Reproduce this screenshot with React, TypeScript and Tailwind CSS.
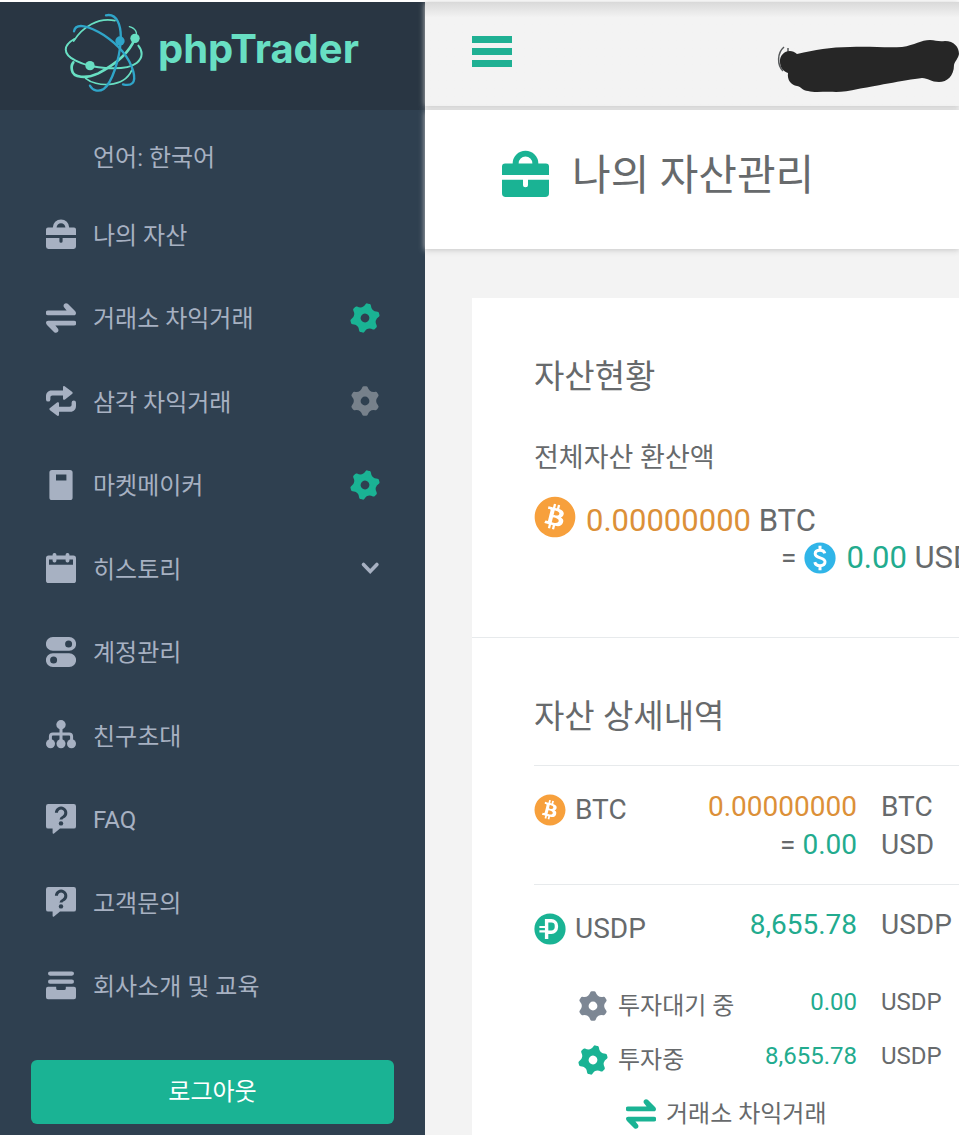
import type { ReactNode } from "react";
import { FaBitcoin } from "react-icons/fa";
import { clsx } from "clsx";

type IconProps = { className?: string };

/* ---------- Icons ---------- */

function BriefcaseIcon({ className }: IconProps) {
  return (
    <svg viewBox="0 0 30 30" fill="currentColor" className={className} aria-hidden="true">
      <path d="M6.8 8.6a8.2 8.2 0 0 1 16.4 0H28a2 2 0 0 1 2 2v5.3H0v-5.3a2 2 0 0 1 2-2zm3.800 0h8.800a4.400 4.400 0 0 0-8.800 0z" />
      <path d="M0 19h13.400v3.200a1.600 1.600 0 0 0 3.200 0V19H30v8.600a2.400 2.400 0 0 1-2.400 2.400H2.400A2.400 2.400 0 0 1 0 27.600z" />
    </svg>
  );
}

function ExchangeIcon({ className }: IconProps) {
  return (
    <svg viewBox="0 0 30 30" fill="currentColor" className={className} aria-hidden="true">
      <path d="M2 7.600h18.600L18 4.200C16.400 1.600 19.400-1 21.800.8L29 8c1.800 1.800 1 4.200-1.200 4.200H2a2.300 2.300 0 0 1 0-4.600z" />
      <path d="M28 22.400H9.400l2.600 3.400c1.600 2.600-1.400 5.200-3.800 3.400L1 22c-1.800-1.800-1-4.200 1.200-4.200H28a2.300 2.300 0 0 1 0 4.600z" />
    </svg>
  );
}

function RepeatIcon({ className }: IconProps) {
  return (
    <svg viewBox="0 0 30 30" fill="currentColor" className={className} aria-hidden="true">
      <path d="M17 1.200c0-1.200 1-1.600 2-.8l7 5.400c.9.700.9 1.500 0 2.200l-7 5.400c-1 .8-2 .4-2-.8V9.400H6.500c-1.400 0-2.100.7-2.100 2v2a2.200 2.200 0 0 1-4.400 0V10.500C0 7 2 4.500 5.600 4.500H17z" />
      <path d="M13 28.800c0 1.200-1 1.600-2 .8l-7-5.400c-.9-.7-.9-1.500 0-2.200l7-5.400c1-.8 2-.4 2 .8v3.400h10.500c1.400 0 2.100-.7 2.100-2v-2a2.200 2.200 0 0 1 4.400 0v2.900c0 3.500-2 6-5.600 6H13z" />
    </svg>
  );
}

function MarketIcon({ className }: IconProps) {
  return (
    <svg viewBox="0 0 30 30" fill="currentColor" fillRule="evenodd" className={className} aria-hidden="true">
      <path d="M6 0h18a2.600 2.600 0 0 1 2.600 2.600v24.800A2.600 2.600 0 0 1 24 30H6a2.600 2.600 0 0 1-2.600-2.600V2.600A2.600 2.600 0 0 1 6 0zm4 4.400v6h10.400v-6z" />
    </svg>
  );
}

function CalendarIcon({ className }: IconProps) {
  return (
    <svg viewBox="0 0 30 30" fill="currentColor" fillRule="evenodd" className={className} aria-hidden="true">
      <path d="M2.600 2.600h24.800A2.600 2.600 0 0 1 30 5.200v22.200a2.600 2.600 0 0 1-2.600 2.600H2.600A2.600 2.600 0 0 1 0 27.400V5.200a2.600 2.600 0 0 1 2.600-2.600zm.4 3.800v5.400h24V6.400z" />
      <rect x="6.600" y="0" width="3.800" height="9.400" rx="1.700" />
      <rect x="19.600" y="0" width="3.800" height="9.400" rx="1.700" />
    </svg>
  );
}

function AccountIcon({ className }: IconProps) {
  return (
    <svg viewBox="0 0 30 30" fill="currentColor" fillRule="evenodd" className={className} aria-hidden="true">
      <path d="M6.800 0h16.400a6.900 6.900 0 0 1 0 13.800H6.800A6.900 6.900 0 0 1 6.800 0zm15.800 3.500a3.500 3.500 0 1 0 0 7 3.500 3.500 0 0 0 0-7z" />
      <path d="M6.800 16.200h16.400a6.900 6.900 0 0 1 0 13.800H6.800a6.900 6.900 0 0 1 0-13.800zm.8 3.400a3.500 3.500 0 1 0 0 7 3.500 3.500 0 0 0 0-7z" />
    </svg>
  );
}

function NetworkIcon({ className }: IconProps) {
  return (
    <svg viewBox="0 0 30 30" fill="currentColor" className={className} aria-hidden="true">
      <path d="M15 5v18M4.400 23v-6.500q0-2.500 2.500-2.500h16.200q2.500 0 2.500 2.500V23" fill="none" stroke="currentColor" strokeWidth="3" />
      <circle cx="15" cy="4.800" r="4.700" />
      <circle cx="4.500" cy="23.800" r="4.500" />
      <circle cx="15" cy="23.800" r="4.500" />
      <circle cx="25.500" cy="23.800" r="4.500" />
    </svg>
  );
}

function QuestionIcon({ className }: IconProps) {
  return (
    <svg viewBox="0 0 30 30" fill="currentColor" className={className} aria-hidden="true">
      <path d="M2.200 0h25.600A2.200 2.200 0 0 1 30 2.200v20.200a2.200 2.200 0 0 1-2.200 2.200H14l-6 4.800c-.8.600-1.400.3-1.400-.6v-4.200H2.200A2.200 2.200 0 0 1 0 22.400V2.200A2.200 2.200 0 0 1 2.200 0z" />
      <path d="M10.400 8.800a4.700 4.700 0 1 1 7.200 4Q15 14.200 15 15.400" fill="none" stroke="#2f4050" strokeWidth="3" />
      <circle cx="15" cy="19.400" r="2.200" fill="#2f4050" />
    </svg>
  );
}

function DrawerIcon({ className }: IconProps) {
  return (
    <svg viewBox="0 0 30 30" fill="currentColor" className={className} aria-hidden="true">
      <rect x="2" y="0.500" width="26" height="4.200" rx="2.100" />
      <rect x="2" y="8.600" width="26" height="4.200" rx="2.100" />
      <path d="M2 15.800h8.200v1.600q0 1.600 1.600 1.600h6.400q1.600 0 1.600-1.600v-1.600H28a2 2 0 0 1 2 2v8.400a2 2 0 0 1-2 2H2a2 2 0 0 1-2-2v-8.400a2 2 0 0 1 2-2z" />
    </svg>
  );
}

// Six-toothed gear, built from tooth tips joined by curved valleys
const polar = (deg: number, r: number) => {
  const a = (deg * Math.PI) / 180;
  return `${(15 + r * Math.sin(a)).toFixed(2)} ${(15 - r * Math.cos(a)).toFixed(2)}`;
};
const GEAR_PATH =
  [0, 60, 120, 180, 240, 300]
    .map((t, i) => `${i ? "" : `M${polar(-5, 13.2)}`}L${polar(t + 5, 13.2)}Q${polar(t + 30, 7)} ${polar(t + 55, 13.2)}`)
    .join("") + "Z";

function GearIcon({ className, active }: IconProps & { active?: boolean }) {
  return (
    <svg
      viewBox="0 0 30 30"
      className={clsx("size-[30px] shrink-0", active && "rotate-[14deg] text-[#1ab394]", className)}
      aria-hidden="true"
    >
      <path
        d={`${GEAR_PATH}M15 9a6 6 0 1 0 0 12a6 6 0 0 0 0-12Z`}
        fill="currentColor"
        fillRule="evenodd"
        stroke="currentColor"
        strokeWidth="3.200"
        strokeLinejoin="round"
      />
    </svg>
  );
}

function ChevronIcon() {
  return (
    <svg viewBox="0 0 20 14" className="h-[14px] w-5 shrink-0" fill="none" stroke="currentColor" strokeWidth="3.600" strokeLinecap="round" aria-hidden="true">
      <path d="M3.500 3.500l6.700 7 6.700-7" />
    </svg>
  );
}

function DollarCoin() {
  return (
    <svg viewBox="0 0 32 32" className="size-8 shrink-0" aria-hidden="true">
      <circle cx="16" cy="16" r="15.600" fill="#30b5e8" />
      <path d="M20.800 11.400c-.5-2-2.300-3.200-4.800-3.200-2.900 0-4.800 1.500-4.800 3.600 0 5 9.800 3.100 9.800 8 0 2.400-2 3.900-5 3.900-2.800 0-4.700-1.300-5.200-3.600M16 3.800v5M16 23v5.200" fill="none" stroke="#fff" strokeWidth="3" />
    </svg>
  );
}

function UsdpCoin() {
  return (
    <svg viewBox="0 0 32 32" className="size-8 shrink-0" aria-hidden="true">
      <circle cx="16" cy="16" r="15.600" fill="#1ab394" />
      <path d="M12.600 26V7.800h4.800a5 5 0 0 1 5 5v1.400a5 5 0 0 1-5 5H13" fill="none" stroke="#fff" strokeWidth="3.400" />
      <path d="M5.400 14h6M5.400 18.400h6" stroke="#fff" strokeWidth="2.200" />
    </svg>
  );
}

function OrbitLogo() {
  return (
    <svg viewBox="27 24 240 240" className="size-20 shrink-0" fill="none" strokeLinecap="round" aria-hidden="true">
      <g stroke="#68dfc3">
        <path d="M180 47C130 36 82 66 56 108" strokeWidth="5" />
        <path d="M58 102C26 120 20 146 62 167C110 192 210 200 245 174C266 158 262 136 250 122" strokeWidth="6" />
        <path d="M240 100C224 142 182 178 130 205C94 222 54 218 51 196C48 184 52 176 55 172" strokeWidth="8" />
        <path d="M240 100C250 84 242 70 223 65" strokeWidth="4" />
        <path d="M92 220C122 246 206 250 230 196" strokeWidth="5" />
      </g>
      <g stroke="#2fa5c9">
        <path d="M153 31C186 24 200 62 197 108C194 162 170 236 146 252C130 262 112 256 105 242" strokeWidth="7" />
        <path d="M57 79C62 52 102 62 146 90C194 122 224 160 235 200C244 234 230 244 204 238" strokeWidth="7" />
      </g>
      <circle cx="195" cy="108" r="14" fill="#2fa5c9" />
      <circle cx="240" cy="100" r="14" fill="#68dfc3" />
      <circle cx="105" cy="182" r="14" fill="#68dfc3" />
    </svg>
  );
}

/* ---------- Sidebar ---------- */

const ICON = "size-[30px] shrink-0";

const MENU: { label: string; icon: ReactNode; extra?: ReactNode }[] = [
  { label: "나의 자산", icon: <BriefcaseIcon className={ICON} /> },
  { label: "거래소 차익거래", icon: <ExchangeIcon className={ICON} />, extra: <GearIcon active /> },
  { label: "삼각 차익거래", icon: <RepeatIcon className={ICON} />, extra: <GearIcon className="text-[#77818b]" /> },
  { label: "마켓메이커", icon: <MarketIcon className={ICON} />, extra: <GearIcon active /> },
  { label: "히스토리", icon: <CalendarIcon className={ICON} />, extra: <ChevronIcon /> },
  { label: "계정관리", icon: <AccountIcon className={ICON} /> },
  { label: "친구초대", icon: <NetworkIcon className={ICON} /> },
  { label: "FAQ", icon: <QuestionIcon className={ICON} /> },
  { label: "고객문의", icon: <QuestionIcon className={ICON} /> },
  { label: "회사소개 및 교육", icon: <DrawerIcon className={ICON} /> },
];

function Sidebar() {
  return (
    <aside className="flex w-[425px] shrink-0 flex-col bg-[#2f4050] pb-[11px] text-2xl text-[#a7b1c2]">
      <a href="#" className="flex h-[108px] items-start gap-[14px] bg-[#293643] pt-[11px] pl-16">
        <OrbitLogo />
        <span className="pt-3 font-[Inter] text-[40px] leading-[48px] font-bold text-[#68dfc3]">phpTrader</span>
      </a>
      <button type="button" className="h-[83px] pt-3 pl-[93px] text-left">
        언어: 한국어
      </button>
      <nav className="flex flex-1 flex-col">
        <ul className="grid flex-1 auto-rows-fr">
          {MENU.map((item) => (
            <li key={item.label} className="flex">
              <a href="#" className="flex flex-1 items-center gap-[17px] pr-[45px] pb-px pl-[46px]">
                {item.icon}
                <span className="flex-1 pt-[3px]">{item.label}</span>
                {item.extra}
              </a>
            </li>
          ))}
        </ul>
      </nav>
      <button type="button" className="mx-[31px] mt-8 h-16 rounded-md bg-[#1ab394] text-white">
        로그아웃
      </button>
    </aside>
  );
}

/* ---------- Main ---------- */

function TopBar() {
  return (
    <header className="flex h-[104px] items-start justify-between bg-[#f3f3f3] bg-linear-to-b from-[#d9d9d9] to-[#f3f3f3] to-15% pl-[47px] shadow-[0_1px_6px_#c4c4c4]">
      <button type="button" aria-label="menu" className="mt-[34px] flex w-10 flex-col gap-[5px]">
        <span className="h-[7px] bg-[#1fb093]" />
        <span className="h-[7px] bg-[#1fb093]" />
        <span className="h-[7px] bg-[#1fb093]" />
      </button>
      <svg viewBox="776 36 183 60" className="mt-[34px] h-[60px] w-[183px] shrink-0" aria-hidden="true">
        <path d="M784 47C777 53 777 65 783 71M788 48v8" fill="none" stroke="#55585a" strokeWidth="1.500" />
        <path
          d="M780 62C779 53 790 47 797 54C815 50 830 47 850 47C870 46 885 48 902 47C915 45 921 40 930 40C936 40 938 42 945 41C954 41 959 47 959 54C958 59 955 61 954 65C954 76 947 82 939 82C931 82 928 78 922 78C905 80 870 87 858 89C850 91 842 92 836 92C826 91 815 93 808 91C803 91 800 86 797 86C791 85 787 80 788 73C783 71 780 67 780 62Z"
          fill="#262626"
        />
      </svg>
    </header>
  );
}

function Num({ children, orange }: { children: ReactNode; orange?: boolean }) {
  return <span className={orange ? "text-[#dc9038]" : "text-[#22ab8e]"}>{children}</span>;
}

function AssetSummary() {
  return (
    <section className="border-b border-[#e7eaec] pt-[59px] pb-[63px] pl-[62px]">
      <h2 className="text-[33px] leading-10">자산현황</h2>
      <h3 className="mt-[45px] text-[27px] leading-8">전체자산 환산액</h3>
      <div className="mt-[22px] flex gap-[10px] text-[31px]">
        <FaBitcoin className="size-[42px] shrink-0 text-[#f7a03c]" />
        <p className="pt-1 leading-[42px]">
          <Num orange>0.00000000</Num> BTC
        </p>
      </div>
      <div className="flex items-center pl-[247px] text-[31px] leading-8 whitespace-nowrap">
        <span className="text-[28px]">=</span>
        <span className="mr-[10px] ml-2">
          <DollarCoin />
        </span>
        <p>
          <Num>0.00</Num> USD
        </p>
      </div>
    </section>
  );
}

function AssetDetails() {
  return (
    <section className="pt-[59px] pl-[62px]">
      <h2 className="text-[33px] leading-10">자산 상세내역</h2>
      <table className="mt-7 w-full table-fixed border-t border-[#e7eaec] text-left whitespace-nowrap">
        <colgroup>
          <col className="w-[150px]" />
          <col className="w-[173px]" />
          <col />
        </colgroup>
        <tbody className="align-top text-[28px] leading-[38px]">
          <tr className="border-b border-[#e7eaec]">
            <th scope="row" className="pt-[25px] font-normal">
              <span className="flex items-center gap-[9px]">
                <FaBitcoin className="size-8 shrink-0 text-[#f7a03c]" />
                BTC
              </span>
            </th>
            <td className="pt-[22px] pb-5 text-right">
              <Num orange>0.00000000</Num>
              <br />
              = <Num>0.00</Num>
            </td>
            <td className="pt-[22px] pl-6">
              BTC
              <br />
              USD
            </td>
          </tr>
          <tr>
            <th scope="row" className="pt-[25px] pb-5 font-normal">
              <span className="flex items-center gap-[9px]">
                <UsdpCoin />
                USDP
              </span>
            </th>
            <td className="pt-[21px] text-right">
              <Num>8,655.78</Num>
            </td>
            <td className="pt-[21px] pl-6">USDP</td>
          </tr>
        </tbody>
        <tbody className="align-top text-2xl leading-8">
          <tr>
            <th scope="row" className="pt-[22px] pl-11 font-normal">
              <span className="flex items-center gap-[10px]">
                <GearIcon className="text-[#7d8794]" />
                투자대기 중
              </span>
            </th>
            <td className="pt-[18px] text-right">
              <Num>0.00</Num>
            </td>
            <td className="pt-[18px] pl-6">USDP</td>
          </tr>
          <tr>
            <th scope="row" className="pt-[22px] pl-11 font-normal">
              <span className="flex items-center gap-[10px]">
                <GearIcon active />
                투자중
              </span>
            </th>
            <td className="pt-[18px] text-right">
              <Num>8,655.78</Num>
            </td>
            <td className="pt-[18px] pl-6">USDP</td>
          </tr>
          <tr>
            <th scope="row" colSpan={3} className="pt-[22px] pl-[92px] font-normal">
              <span className="flex items-center gap-[10px]">
                <ExchangeIcon className="size-[30px] shrink-0 text-[#1ab394]" />
                거래소 차익거래
              </span>
            </th>
          </tr>
        </tbody>
      </table>
    </section>
  );
}

export default function App() {
  return (
    <div
      lang="ko"
      className="flex min-h-screen overflow-x-hidden bg-white pt-[2px] font-[Roboto,'Noto_Sans_CJK_KR',sans-serif] text-[#676a6c]"
    >
      <Sidebar />
      <main className="flex min-w-0 flex-1 flex-col bg-[#f3f3f3]">
        <TopBar />
        <div className="relative mt-1 flex h-[139px] items-start gap-[23px] bg-white pt-10 pl-[77px] shadow-[0_1px_6px_#c4c4c4]">
          <BriefcaseIcon className="size-[47px] shrink-0 text-[#1ab394]" />
          <h1 className="text-[42px] leading-[52px] whitespace-nowrap">나의 자산관리</h1>
        </div>
        <div className="mt-[49px] ml-[47px] flex-1 bg-white">
          <AssetSummary />
          <AssetDetails />
        </div>
      </main>
    </div>
  );
}
